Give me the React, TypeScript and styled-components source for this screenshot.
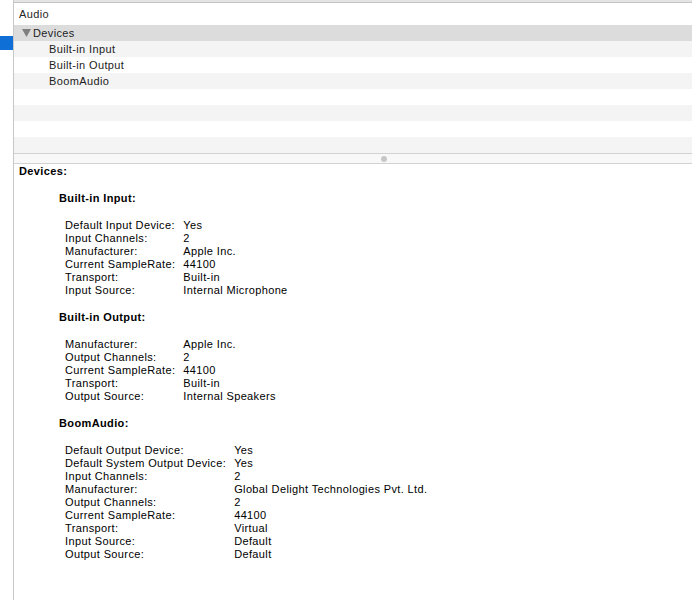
import React from 'react';
import styled, {createGlobalStyle} from 'styled-components';

type Field = [string, string];

type Device = {
  name: string;
  fields: Field[];
};

const devices: Device[] = [
  {
    name: 'Built-in Input',
    fields: [
      ['Default Input Device:', 'Yes'],
      ['Input Channels:', '2'],
      ['Manufacturer:', 'Apple Inc.'],
      ['Current SampleRate:', '44100'],
      ['Transport:', 'Built-in'],
      ['Input Source:', 'Internal Microphone'],
    ],
  },
  {
    name: 'Built-in Output',
    fields: [
      ['Manufacturer:', 'Apple Inc.'],
      ['Output Channels:', '2'],
      ['Current SampleRate:', '44100'],
      ['Transport:', 'Built-in'],
      ['Output Source:', 'Internal Speakers'],
    ],
  },
  {
    name: 'BoomAudio',
    fields: [
      ['Default Output Device:', 'Yes'],
      ['Default System Output Device:', 'Yes'],
      ['Input Channels:', '2'],
      ['Manufacturer:', 'Global Delight Technologies Pvt. Ltd.'],
      ['Output Channels:', '2'],
      ['Current SampleRate:', '44100'],
      ['Transport:', 'Virtual'],
      ['Input Source:', 'Default'],
      ['Output Source:', 'Default'],
    ],
  },
];

const EMPTY_ROWS = 4;

function App() {
  return (
    <>
      <GlobalStyle />
      <Window>
        <Sidebar>
          <SelectionMarker />
        </Sidebar>

        <Main>
          <TopEdge />
          <Header>Audio</Header>

          <TreeList>
            <GroupRow>
              <Disclosure width="9" height="8" viewBox="0 0 9 8">
                <path d="M0 0 H9 L4.5 8 Z" fill="#808080" />
              </Disclosure>
              Devices
            </GroupRow>
            {devices.map((device, i) => (
              <TreeRow key={device.name} striped={i % 2 === 0}>
                {device.name}
              </TreeRow>
            ))}
            {Array.from({length: EMPTY_ROWS}).map((_, i) => (
              <TreeRow key={i} striped={(devices.length + i) % 2 === 0} />
            ))}
          </TreeList>

          <Splitter>
            <Grip />
          </Splitter>

          <Detail>
            <Title>Devices:</Title>
            {devices.map((device) => (
              <Section key={device.name}>
                <SectionTitle>{device.name}:</SectionTitle>
                <FieldTable>
                  <tbody>
                    {device.fields.map(([label, value]) => (
                      <tr key={label}>
                        <FieldLabel>{label}</FieldLabel>
                        <FieldValue>{value}</FieldValue>
                      </tr>
                    ))}
                  </tbody>
                </FieldTable>
              </Section>
            ))}
          </Detail>
        </Main>
      </Window>
    </>
  );
}

const GlobalStyle = createGlobalStyle`
  html, body {
    margin: 0;
    padding: 0;
    background: #fff;
  }

  body {
    font-family: "Liberation Sans", Arial, sans-serif;
    font-size: 11px;
    letter-spacing: 0.37px;
    color: #000;
  }
`;

const Window = styled.div`
  display: flex;
  width: 692px;
  height: 600px;
  overflow: hidden;
  background: #fff;
`;

const Sidebar = styled.div`
  width: 13px;
  flex-shrink: 0;
  border-right: 1px solid #c8c8c8;
  padding-top: 36px;
  box-sizing: content-box;
`;

const SelectionMarker = styled.div`
  height: 14px;
  background: #0f6fd7;
`;

const Main = styled.div`
  flex: 1;
  display: flex;
  flex-direction: column;
  min-width: 0;
`;

const TopEdge = styled.div`
  height: 2px;
  background: #e4e4e4;
  border-bottom: 1px solid #c4c4c4;
`;

const Header = styled.div`
  height: 22px;
  line-height: 22px;
  padding-left: 5px;
  color: #262626;
`;

const TreeList = styled.div`
  display: flex;
  flex-direction: column;
`;

const TreeRow = styled.div<{striped?: boolean}>`
  height: 16px;
  line-height: 17px;
  padding-left: 35px;
  color: #1c1c1c;
  background: ${(p) => (p.striped ? '#f4f4f4' : '#fff')};
`;

const GroupRow = styled.div`
  display: flex;
  align-items: center;
  height: 16px;
  padding-left: 8px;
  color: #1c1c1c;
  background: #dcdcdc;
`;

const Disclosure = styled.svg`
  margin-right: 2px;
`;

const Splitter = styled.div`
  height: 9px;
  border-top: 1px solid #d2d2d2;
  border-bottom: 1px solid #d2d2d2;
  background: #f8f8f8;
  display: flex;
  align-items: center;
  justify-content: center;
  padding-left: 62px;
`;

const Grip = styled.div`
  width: 6px;
  height: 6px;
  border-radius: 50%;
  background: #c6c6c6;
`;

const Detail = styled.div`
  padding: 1px 0 0 5px;
  line-height: 13px;
`;

const Title = styled.div`
  font-weight: bold;
`;

const Section = styled.div`
  padding: 14px 0 0 40px;
`;

const SectionTitle = styled.div`
  font-weight: bold;
  margin-bottom: 14px;
`;

const FieldTable = styled.table`
  border-collapse: collapse;
  margin-left: 6px;
`;

const FieldLabel = styled.td`
  padding: 0 8px 0 0;
  white-space: nowrap;
  vertical-align: top;
`;

const FieldValue = styled.td`
  padding: 0;
  white-space: nowrap;
`;

export default App;
